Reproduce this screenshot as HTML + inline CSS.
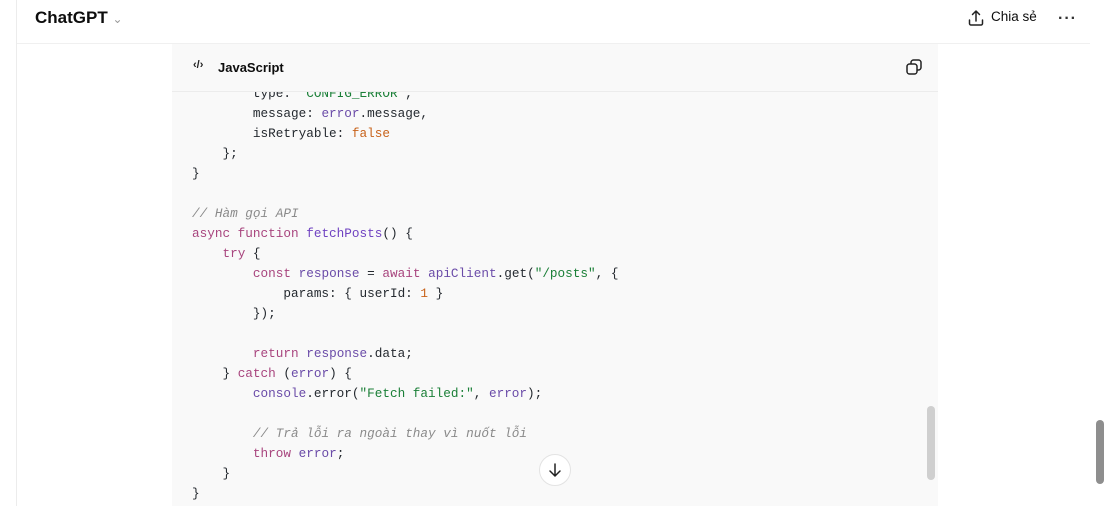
<!DOCTYPE html>
<html><head><meta charset="utf-8"><style>
html,body{margin:0;padding:0;background:#fff;width:1108px;height:506px;overflow:hidden;position:relative;font-family:"Liberation Sans",sans-serif;}
.lb{position:absolute;left:16px;top:0;width:1px;height:506px;background:#ececec;}
.title{position:absolute;left:35px;top:8px;font-size:17px;font-weight:bold;color:#0d0d0d;}
.hr{position:absolute;left:17px;top:43px;width:1073px;height:1px;background:#f0f0f0;}
.share{position:absolute;left:968px;top:9px;font-size:13.5px;color:#0d0d0d;}
.dots{position:absolute;left:1058px;top:10px;font-size:16px;font-weight:bold;color:#333;letter-spacing:1px;}
.panel{position:absolute;left:172px;top:44px;width:766px;height:462px;background:#f9f9f9;}
.lang{position:absolute;left:46px;top:16px;font-size:13px;font-weight:bold;color:#0d0d0d;}
.code{position:absolute;left:20px;top:40px;font-family:"Liberation Mono",monospace;font-size:12.7px;line-height:20px;color:#24292f;white-space:pre;}
.k{color:#a8457e}.f{color:#6f42c1}.s{color:#1a7f37}.c{color:#8a8a8a;font-style:italic}.n{color:#c8621a}.v{color:#6a4ba8}
.sb1{position:absolute;left:927px;top:406px;width:8px;height:74px;border-radius:4px;background:#cfcfcf;}
.sb2{position:absolute;left:1096px;top:420px;width:8px;height:64px;border-radius:4px;background:#8e8e8e;}
.down{position:absolute;left:539px;top:454px;width:30px;height:30px;border-radius:50%;background:#fff;border:1px solid #e3e3e3;}
</style></head><body>
<div class="lb"></div>
<div class="title">ChatGPT <span style="font-weight:normal;color:#999;font-size:12px">&#8964;</span></div>
<svg style="position:absolute;left:967px;top:9px" width="18" height="18" viewBox="0 0 18 18" fill="none" stroke="#222" stroke-width="1.5" stroke-linecap="round" stroke-linejoin="round"><path d="M9 12V2M5.5 5.5L9 2l3.5 3.5M2.5 11v3.5c0 .8.7 1.5 1.5 1.5h10c.8 0 1.5-.7 1.5-1.5V11"/></svg>
<div class="share" style="left:991px">Chia sẻ</div>
<div class="dots">···</div>
<div class="hr"></div>
<div class="panel">
 <div class="code">        type: <span class="s">"CONFIG_ERROR"</span>,
        message: <span class="v">error</span>.message,
        isRetryable: <span class="n">false</span>
    };
}

<span class="c">// Hàm gọi API</span>
<span class="k">async function</span> <span class="f">fetchPosts</span>() {
    <span class="k">try</span> {
        <span class="k">const</span> <span class="v">response</span> = <span class="k">await</span> <span class="v">apiClient</span>.get(<span class="s">"/posts"</span>, {
            params: { userId: <span class="n">1</span> }
        });

        <span class="k">return</span> <span class="v">response</span>.data;
    } <span class="k">catch</span> (<span class="v">error</span>) {
        <span class="v">console</span>.error(<span class="s">"Fetch failed:"</span>, <span class="v">error</span>);

        <span class="c">// Trả lỗi ra ngoài thay vì nuốt lỗi</span>
        <span class="k">throw</span> <span class="v">error</span>;
    }
}</div>
</div>
<div style="position:absolute;left:172px;top:44px;width:766px;height:47px;background:#f9f9f9;border-bottom:1px solid #ececec;z-index:1">
  <div style="position:absolute;left:21px;top:15px;font-size:11px;font-weight:bold;color:#222">&lsaquo;/&rsaquo;</div>
  <div class="lang">JavaScript</div>
  <svg style="position:absolute;left:733px;top:14px" width="18" height="18" viewBox="0 0 18 18" fill="none" stroke="#222" stroke-width="1.5"><rect x="2" y="6" width="10" height="10" rx="2.5"/><path d="M6 6V4.5A2.5 2.5 0 0 1 8.5 2h5A2.5 2.5 0 0 1 16 4.5v5a2.5 2.5 0 0 1-2.5 2.5H12"/></svg>
</div>
<div class="sb1"></div>
<div class="sb2"></div>
<div class="down"><svg style="position:absolute;left:7px;top:7px" width="16" height="16" viewBox="0 0 16 16" fill="none" stroke="#222" stroke-width="1.5" stroke-linecap="round" stroke-linejoin="round"><path d="M8 2v12M3 9l5 5 5-5"/></svg></div>
</body></html>
